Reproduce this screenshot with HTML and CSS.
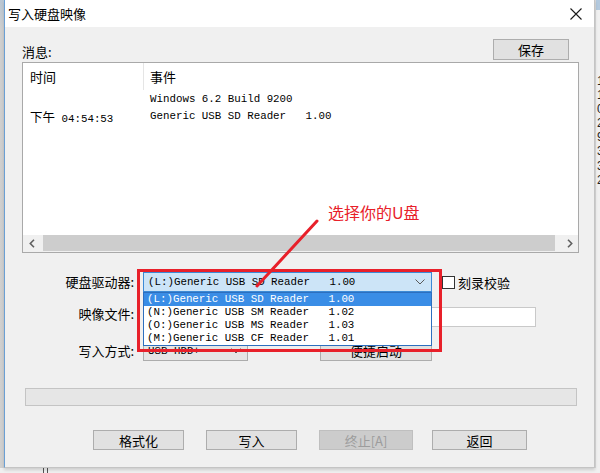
FILE: index.html
```html
<!DOCTYPE html>
<html lang="zh-CN">
<head>
<meta charset="utf-8">
<title>写入硬盘映像</title>
<link rel="stylesheet" href="styles.css">
</head>
<body>
<div class="screen">
  <div class="desk">
    <div class="edge-left"></div>
    <div class="dialog">
      <div class="titlebar">
        <span class="title">写入硬盘映像</span>
        <svg class="close" width="12" height="12" viewBox="0 0 12 12"><path d="M0.5 0.5 L11.5 11.5 M11.5 0.5 L0.5 11.5" stroke="#1a1a1a" stroke-width="1.1" fill="none"/></svg>
      </div>
      <div class="content">
        <div class="msg-row">
          <span class="msg-label">消息:</span>
          <div class="btn btn-save">保存</div>
        </div>
        <div class="listbox">
          <div class="lv-head">
            <div class="c1">时间</div>
            <div class="c2">事件</div>
          </div>
          <div class="lv-rows">
            <div class="lv-row"><div class="c1"></div><div class="c2 mono">Windows 6.2 Build 9200</div></div>
            <div class="lv-row"><div class="c1"><span class="cjk">下午</span><span class="mono"> 04:54:53</span></div><div class="c2 mono">Generic USB SD Reader   1.00</div></div>
          </div>
          <div class="hscroll">
            <div class="sb-btn"><svg width="6" height="9" viewBox="0 0 6 9"><path d="M5 0.8 L1.3 4.5 L5 8.2" stroke="#606060" stroke-width="1.6" fill="none"/></svg></div>
            <div class="sb-thumb"></div>
            <div class="sb-btn"><svg width="6" height="9" viewBox="0 0 6 9"><path d="M1 0.8 L4.7 4.5 L1 8.2" stroke="#606060" stroke-width="1.6" fill="none"/></svg></div>
          </div>
        </div>

        <div class="form-row row-drive">
          <span class="lbl">硬盘驱动器:</span>
          <div class="combo combo-open">
            <span class="mono">(L:)Generic USB SD Reader   1.00</span>
            <svg width="10" height="6" viewBox="0 0 10 6"><path d="M0.5 0.5 L5 5 L9.5 0.5" stroke="#5a5a5a" stroke-width="1" fill="none"/></svg>
            <div class="droplist">
              <div class="opt sel mono">(L:)Generic USB SD Reader   1.00</div>
              <div class="opt mono">(N:)Generic USB SM Reader   1.02</div>
              <div class="opt mono">(O:)Generic USB MS Reader   1.03</div>
              <div class="opt mono">(M:)Generic USB CF Reader   1.01</div>
            </div>
          </div>
          <span class="check"></span>
          <span class="check-lbl">刻录校验</span>
        </div>

        <div class="form-row row-image">
          <span class="lbl lbl-up">映像文件:</span>
          <div class="input"></div>
        </div>

        <div class="form-row row-mode">
          <span class="lbl">写入方式:</span>
          <div class="combo combo-mode">
            <span class="mono">USB-HDD+</span>
            <svg width="10" height="6" viewBox="0 0 10 6"><path d="M0.5 0.5 L5 5 L9.5 0.5" stroke="#5a5a5a" stroke-width="1" fill="none"/></svg>
          </div>
          <div class="btn btn-quick">便捷启动</div>
        </div>

        <div class="progress"></div>

        <div class="btn-row">
          <div class="btn btn-fmt">格式化</div>
          <div class="btn btn-write">写入</div>
          <div class="btn btn-stop disabled">终止[A]</div>
          <div class="btn btn-back">返回</div>
        </div>
      </div>
    </div>
    <div class="edge-right">
      <div class="edge-top"></div>
      <div class="nums">1<br>1<br>0<br>2<br>9<br>3<br>3<br>2</div>
    </div>
  </div>
  <div class="bottom-strip"><span class="mark"></span><span class="mark"></span></div>

  <div class="annot">
    <svg class="annot-line" width="600" height="473" viewBox="0 0 600 473"><line x1="317" y1="221" x2="257" y2="286" stroke="#e8202a" stroke-width="3" stroke-linecap="round"/></svg>
    <div class="annot-box"></div>
    <div class="annot-text">选择你的U盘</div>
  </div>
</div>
</body>
</html>
```

FILE: styles.css
```css
* { box-sizing: border-box; }
html, body { margin: 0; padding: 0; }
body {
  width: 600px;
  height: 473px;
  overflow: hidden;
  background: #f0f0f0;
  font-family: "Noto Sans CJK SC", "Noto Sans", sans-serif;
  font-size: 13px;
  color: #000;
}
.screen { position: relative; width: 600px; height: 473px; }
.desk { display: flex; height: 468px; }

.edge-left { width: 4px; background: linear-gradient(#b9c6d3, #cfcfcf 30px, #d0d0d0); }
.edge-right { width: 5px; background: #f0f0f0; overflow: hidden; border-left: 1px solid #d8d8d8; }
.edge-top { height: 10px; background: #b3c9de; }
.nums {
  padding-top: 64px;
  padding-left: 1px;
  font-family: "Liberation Sans", sans-serif;
  font-size: 12px;
  line-height: 14.1px;
  color: #222;
}
.bottom-strip { height: 5px; display: flex; gap: 3px; padding-left: 43px; background: #f0f0f0; }
.mark { width: 1px; height: 5px; background: #555; }

.dialog {
  width: 591px;
  display: flex;
  flex-direction: column;
  background: #f0f0f0;
  border-left: 1px solid #6a9fd4;
  border-right: 1px solid #c4c4c4;
  border-bottom: 1px solid #c4c4c4;
  box-shadow: 0 2px 3px rgba(0, 0, 0, 0.15);
  position: relative;
  z-index: 1;
}
.titlebar {
  height: 27px;
  flex: none;
  background: #fff;
  display: flex;
  align-items: center;
  justify-content: space-between;
  padding: 0 12px 0 3px;
}
.title { font-size: 13px; line-height: 27px; }
.close { display: block; }

.content { flex: 1; padding: 0 15px 0 17px; display: flex; flex-direction: column; }

.msg-row {
  margin-top: 12px;
  height: 21px;
  display: flex;
  justify-content: space-between;
  align-items: center;
  padding-right: 10px;
}
.msg-label { line-height: 21px; padding-top: 3px; }

.btn {
  display: flex;
  align-items: center;
  justify-content: center;
  background: #e1e1e1;
  border: 1px solid #adadad;
  font-size: 13px;
  line-height: 1;
}
.btn.disabled { background: #cccccc; border-color: #bfbfbf; color: #9c9c9c; }
.btn-save { width: 76px; height: 21px; }

.mono {
  font-family: "Liberation Mono", "DejaVu Sans Mono", monospace;
  font-size: 10.8px;
  white-space: pre;
}
.cjk { font-size: 12.5px; }

.listbox {
  margin-top: 2px;
  height: 191px;
  border: 1px solid #a9a9a9;
  background: #fff;
  display: flex;
  flex-direction: column;
}
.lv-head { height: 27px; display: flex; flex: none; }
.lv-head .c1 { width: 121px; border-right: 1px solid #e5e5e5; padding-left: 7px; line-height: 27px; }
.lv-head .c2 { padding-left: 6px; line-height: 27px; }
.lv-rows { margin-top: 1px; flex: 1; }
.lv-row { display: flex; height: 17px; line-height: 17px; }
.lv-row .c1 { width: 121px; padding-left: 7px; white-space: nowrap; }
.lv-row .c2 { padding-left: 6px; }

.hscroll { height: 17px; flex: none; display: flex; background: #f0f0f0; }
.sb-btn { width: 17px; display: flex; align-items: center; justify-content: center; }
.sb-btn svg { display: block; }
.sb-thumb { flex: 1; margin: 0 6px 1px 3px; background: #cdcdcd; }

.form-row { display: flex; align-items: center; }
.lbl { width: 112px; flex: none; text-align: right; margin-right: 9px; line-height: 20px; }
.lbl-up { margin-top: -7px; }
.row-drive { margin-top: 19px; height: 20px; }
.row-image { margin-top: 15px; height: 20px; }
.row-mode { margin-top: 13px; height: 21px; }

.combo {
  position: relative;
  height: 100%;
  display: flex;
  align-items: center;
  justify-content: space-between;
  padding: 0 6px 0 4px;
}
.combo svg { display: block; }
.combo-open { width: 289px; background: #cce4f7; border: 1px solid #3c8ad6; }
.combo-mode { width: 105px; background: #e5e5e5; border: 1px solid #acacac; }

.droplist {
  position: absolute;
  left: -1px;
  top: 19px;
  width: 289px;
  height: 54px;
  border: 1px solid #2d6fbf;
  background: #fff;
  z-index: 2;
}
.opt { height: 13px; line-height: 13px; padding-left: 3px; }
.opt.sel { background: #3a8de6; color: #fff; }

.check { width: 13px; height: 13px; border: 1px solid #333; background: #fff; margin-left: 10px; flex: none; }
.check-lbl { margin-left: 3px; }

.input { width: 393px; height: 20px; background: #fff; border: 1px solid #c9c9c9; }
.btn-quick { width: 112px; height: 21px; margin-left: 72px; }

.progress { margin: 27px 2px 0 3px; height: 18px; border: 1px solid #c4c4c4; background: #e6e6e6; flex: none; }

.btn-row { margin-top: 24px; height: 20px; display: flex; padding-left: 71px; }
.btn-fmt { width: 91px; }
.btn-write { width: 91px; margin-left: 22px; }
.btn-stop { width: 94px; margin-left: 22px; }
.btn-back { width: 95px; margin-left: 19px; }

.annot { position: absolute; left: 0; top: 0; width: 600px; height: 473px; pointer-events: none; z-index: 5; }
.annot-line { position: absolute; left: 0; top: 0; }
.annot-box { position: absolute; left: 137px; top: 269px; width: 305px; height: 83px; border: 3px solid #e8202a; }
.annot-text { position: absolute; left: 328px; top: 201px; font-size: 16px; line-height: 22px; color: #e8202a; }
```
